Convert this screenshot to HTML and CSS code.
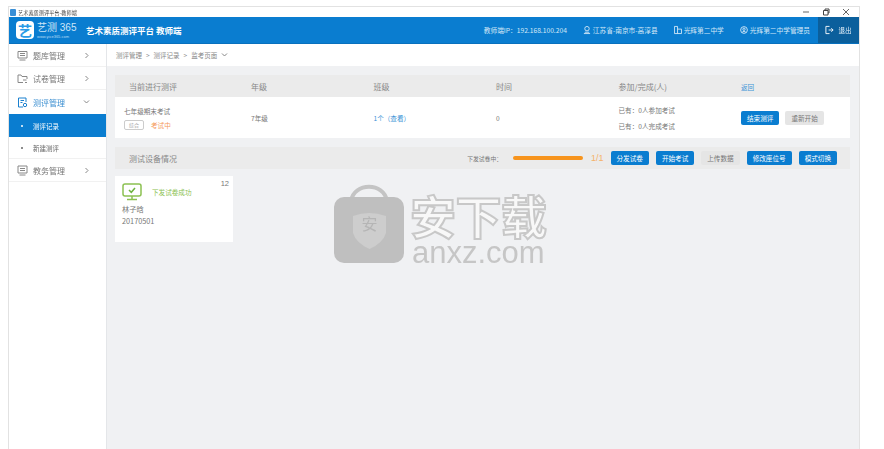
FILE: index.html
```html
<!DOCTYPE html>
<html>
    <head>
        <meta charset="utf-8">
        <title>艺术素质测评平台-教师端</title>
        <link rel="stylesheet" href="styles.css">
    </head>
    <body>
        <div class="window">
            <div class="titlebar">
                <span class="app-icon"></span>
                <span class="title-text">艺术素质测评平台-教师端</span>
                <div class="win-controls">
                    <svg width="8" height="8" viewBox="0 0 8 8"><path d="M1 4h6" stroke="#666" fill="none"/></svg>
                    <svg width="8" height="8" viewBox="0 0 8 8"><path d="M1.500 2.500h4.500v4.500h-4.500zM3 2.500v-1.500h4v4h-1" stroke="#444" fill="none"/></svg>
                    <svg width="8" height="8" viewBox="0 0 8 8"><path d="M1 1l6 6M7 1l-6 6" stroke="#666" fill="none"/></svg>
                </div>
            </div>
            <div class="topbar">
                <div class="logo">
                    <span class="logo-mark">艺</span>
                    <div class="logo-name">
                        <span class="logo-big">艺测 365</span>
                        <span class="logo-url">www.yice365.com</span>
                    </div>
                </div>
                <div class="platform">艺术素质测评平台 教师端</div>
                <div class="top-info">
                    <span class="ip">教师端IP：192.168.100.204</span>
                    <span class="info-item">
                        <svg width="8" height="10" viewBox="0 0 9 10"><circle cx="4.500" cy="3.500" r="2.500" stroke="#d5e8f7" fill="none"/><path d="M1 9h7M2 7.500h5" stroke="#d5e8f7" fill="none"/></svg>
                        江苏省-南京市-高淳县
                    </span>
                    <span class="info-item">
                        <svg width="8" height="10" viewBox="0 0 9 10"><path d="M.5 9V1h3.500v8M4 4h4.500v5H.5" stroke="#d5e8f7" fill="none"/></svg>
                        光辉第二中学
                    </span>
                    <span class="info-item">
                        <svg width="8" height="10" viewBox="0 0 9 10"><circle cx="4.500" cy="5" r="3.800" stroke="#d5e8f7" fill="none"/><circle cx="4.500" cy="4.200" r="1.300" stroke="#d5e8f7" fill="none"/><path d="M2.500 7.500c1-1.200 3-1.200 4 0" stroke="#d5e8f7" fill="none"/></svg>
                        光辉第二中学管理员
                    </span>
                </div>
                <div class="logout">
                    <svg width="9" height="10" viewBox="0 0 10 10"><path d="M5 1H1v8h4M4 5h5M7 3l2 2-2 2" stroke="#fff" fill="none"/></svg>
                    退出
                </div>
            </div>
            <div class="main">
                <div class="sidebar">
                    <div class="menu-item">
                        <svg class="menu-icon" width="11" height="11" viewBox="0 0 11 11"><path d="M1 1.500h9v6.500H1zM3 3.500h5M3 5.500h5M2.500 10h6" stroke="#888" fill="none"/></svg>
                        <span class="menu-name">题库管理</span>
                        <svg class="arrow" width="6" height="7" viewBox="0 0 6 7"><path d="M1.500 1l2.500 2.500L1.500 6" stroke="#888" fill="none"/></svg>
                    </div>
                    <div class="menu-item">
                        <svg class="menu-icon" width="11" height="11" viewBox="0 0 11 11"><path d="M6 9.500H1V2h3l1 1.500h5V6M6 7h3.500M8 9.500h2" stroke="#888" fill="none"/></svg>
                        <span class="menu-name">试卷管理</span>
                        <svg class="arrow" width="6" height="7" viewBox="0 0 6 7"><path d="M1.500 1l2.500 2.500L1.500 6" stroke="#888" fill="none"/></svg>
                    </div>
                    <div class="menu-item active-group">
                        <svg class="menu-icon" width="11" height="11" viewBox="0 0 11 11"><path d="M9 5V1H1.500v9H6M3.500 3.500h3.500M3.500 5.500h2" stroke="#1a80cf" fill="none"/><circle cx="8" cy="8" r="1.700" stroke="#1a80cf" fill="none"/></svg>
                        <span class="menu-name">测评管理</span>
                        <svg class="arrow" width="7" height="6" viewBox="0 0 7 6"><path d="M1 1.500l2.500 2.500L6 1.500" stroke="#888" fill="none"/></svg>
                    </div>
                    <div class="sub-item sub-active"><i class="dot"></i>测评记录</div>
                    <div class="sub-item"><i class="dot"></i>新建测评</div>
                    <div class="menu-item">
                        <svg class="menu-icon" width="11" height="11" viewBox="0 0 11 11"><path d="M1 1h9v7H1zM3 3.500h5M3 5.500h5M2.500 10h6" stroke="#888" fill="none"/></svg>
                        <span class="menu-name">教务管理</span>
                        <svg class="arrow" width="6" height="7" viewBox="0 0 6 7"><path d="M1.500 1l2.500 2.500L1.500 6" stroke="#888" fill="none"/></svg>
                    </div>
                </div>
                <div class="content">
                    <div class="crumbs">
                        <span>测评管理</span><span class="sep">&gt;</span><span>测评记录</span><span class="sep">&gt;</span><span>监考页面</span>
                        <svg width="7" height="6" viewBox="0 0 7 6"><path d="M1 1.500l2.500 2.500L6 1.500" stroke="#888" fill="none"/></svg>
                    </div>
                    <div class="panels">
                        <div class="table">
                            <div class="table-row table-head">
                                <div class="col-name head-first">当前进行测评</div>
                                <div class="col-grade">年级</div>
                                <div class="col-class">班级</div>
                                <div class="col-time">时间</div>
                                <div class="col-count">参加/完成(人)</div>
                                <div class="col-ops"><a class="back">返回</a></div>
                            </div>
                            <div class="table-row table-body">
                                <div class="col-name">
                                    <div class="exam-name">七年级期末考试</div>
                                    <div class="exam-state"><span class="tag">综合</span><span class="state">考试中</span></div>
                                </div>
                                <div class="col-grade">7年级</div>
                                <div class="col-class"><a class="link">1个（查看）</a></div>
                                <div class="col-time">0</div>
                                <div class="col-count count-lines">
                                    <div>已有：0人参加考试</div>
                                    <div>已有：0人完成考试</div>
                                </div>
                                <div class="col-ops ops-btns">
                                    <button class="btn">结束测评</button>
                                    <button class="btn btn-gray">重新开始</button>
                                </div>
                            </div>
                        </div>
                        <div class="device-head">
                            <div class="device-title">测试设备情况</div>
                            <div class="progress-label">下发试卷中：</div>
                            <div class="progress"></div>
                            <div class="progress-num">1/1</div>
                            <button class="btn">分发试卷</button>
                            <button class="btn">开始考试</button>
                            <button class="btn btn-gray">上传数据</button>
                            <button class="btn">修改座位号</button>
                            <button class="btn">模式切换</button>
                        </div>
                        <div class="device-card">
                            <div class="seat">12</div>
                            <div class="device-status">
                                <svg width="20" height="18" viewBox="0 0 20 18"><rect x="1" y="1" width="18" height="12" rx="2" stroke="#8cc152" stroke-width="1.500" fill="#fff"/><path d="M7 7l2.300 2.300L13 5" stroke="#6db33f" stroke-width="1.500" fill="none"/><path d="M10 13v3M5 16.500h10" stroke="#8cc152" stroke-width="1.500" fill="none"/></svg>
                                <span class="status-text">下发试卷成功</span>
                            </div>
                            <div class="student">林子晗</div>
                            <div class="student">20170501</div>
                        </div>
                    </div>
                </div>
            </div>
        </div>
        <div class="watermark">
            <svg width="72" height="82" viewBox="0 0 72 82">
                <path d="M17 18C20 -1 50 -1 53 18" stroke="#c4c4c4" stroke-width="4" fill="none"/>
                <rect x="0" y="14" width="70" height="66" rx="10" fill="#bfbfbf"/>
                <path d="M19 33q16-6 33 0v17q-3 10-16.500 16q-13.500-6-16.500-16z" fill="#cdcdcd"/>
                <text x="35.500" y="47" font-size="16" text-anchor="middle" fill="#b5b5b5" font-family="Noto Sans CJK SC">安</text>
            </svg>
            <div class="wm-text">
                <div class="wm-cn">安下载</div>
                <div class="wm-en">anxz.com</div>
            </div>
        </div>
    </body>
</html>
```

FILE: styles.css
```css
html, body {
    margin: 0;
    height: 100%;
    overflow: hidden;
    background: #fff;
}
body {
    font-family: "Noto Sans CJK SC", "Liberation Sans", sans-serif;
    font-size: 6.600px;
    color: #777;
    padding: 6px 24px 0 8px;
    box-sizing: border-box;
}
.window {
    height: 100%;
    display: flex;
    flex-direction: column;
    border: 1px solid #e2e2e2;
    border-bottom: none;
    box-sizing: border-box;
    filter: blur(.3px);
}
.titlebar {
    height: 10px;
    display: flex;
    align-items: center;
    gap: 2px;
    padding-left: 1px;
    color: #444;
    font-size: 5.200px;
}
.app-icon {
    width: 6px;
    height: 7px;
    background: #3a8fd6;
    border-radius: 1px;
}
.win-controls {
    margin-left: auto;
    display: flex;
    gap: 12px;
    padding-right: 9px;
}
.topbar {
    height: 27px;
    background: #0a7dd0;
    display: flex;
    align-items: center;
    color: #fff;
    border-bottom: 1px solid #0870bd;
    box-sizing: border-box;
}
.logo {
    display: flex;
    align-items: center;
    gap: 3px;
    padding-left: 7px;
    width: 61px;
}
.logo-mark {
    width: 18px;
    height: 18px;
    background: #fff;
    color: #2b9be6;
    border-radius: 4px;
    font-size: 14px;
    font-weight: 700;
    line-height: 18px;
    text-align: center;
}
.logo-name {
    display: flex;
    flex-direction: column;
}
.logo-big {
    font-family: "Liberation Sans", "Noto Sans CJK SC", sans-serif;
    font-size: 10px;
    line-height: 12px;
    color: #cfe6f8;
    white-space: nowrap;
}
.logo-url {
    font-family: "Liberation Sans", sans-serif;
    font-size: 4px;
    line-height: 5px;
    color: #b9dbf4;
}
.platform {
    margin-left: 9px;
    font-size: 8.500px;
    font-weight: 700;
}
.top-info {
    margin-left: auto;
    display: flex;
    align-items: center;
    color: #d5e8f7;
    gap: 16.500px;
    padding-right: 8px;
    font-size: 6.700px;
}
.info-item {
    display: flex;
    align-items: center;
    gap: 1.500px;
}
.logout {
    width: 41px;
    height: 100%;
    background: #0b5f9c;
    display: flex;
    align-items: center;
    justify-content: center;
    gap: 4px;
    color: #e6f1fa;
}
.main {
    flex: 1;
    display: flex;
    min-height: 0;
}
.sidebar {
    width: 97px;
    background: #fff;
    border-right: 1px solid #e4e6e9;
    flex-shrink: 0;
}
.menu-item {
    height: 23px;
    display: flex;
    align-items: center;
    padding: 0 16px 0 8px;
    font-size: 8px;
    color: #777;
    border-bottom: 1px solid #f1f1f1;
    box-sizing: border-box;
}
.menu-icon {
    margin-right: 5px;
}
.menu-name {
    flex: 1;
}
.active-group {
    height: 24px;
    color: #3b8fd1;
    border-bottom: none;
}
.sub-item {
    height: 23px;
    display: flex;
    align-items: center;
    padding-left: 12px;
    font-size: 6.500px;
    color: #666;
    border-bottom: 1px solid #f1f1f1;
    box-sizing: border-box;
}
.sub-item + .sub-item {
    height: 22px;
}
.sub-active {
    background: #0a7dd0;
    color: #fff;
    border-bottom: none;
}
.dot {
    width: 2px;
    height: 2px;
    background: currentColor;
    border-radius: 50%;
    margin-right: 10px;
}
.content {
    flex: 1;
    background: #f0f1f3;
    min-width: 0;
}
.crumbs {
    height: 22px;
    background: #fff;
    display: flex;
    align-items: center;
    gap: 4px;
    padding-left: 9px;
    font-size: 6.500px;
    color: #888;
}
.panels {
    padding: 9px 9px 0 8px;
}
.table-row {
    display: flex;
    align-items: center;
}
.table-head {
    height: 22px;
    background: #ebebeb;
    font-size: 8px;
    color: #888;
}
.table-body {
    height: 41px;
    background: #fff;
}
.col-name {
    width: 136px;
    padding-left: 9px;
    box-sizing: border-box;
}
.head-first {
    padding-left: 14px;
}
.col-grade,
.col-class,
.col-time,
.col-count {
    width: 122.500px;
}
.back, .link {
    color: #3c93d6;
}
.back {
    font-size: 6.600px;
}
.exam-state {
    display: flex;
    align-items: center;
    gap: 7px;
    margin-top: 4px;
}
.exam-name {
    line-height: 10px;
}
.tag {
    border: 1px solid #ccc;
    border-radius: 2px;
    font-size: 5px;
    padding: 0 4px;
    line-height: 8px;
    color: #999;
}
.state {
    color: #f59a5a;
}
.count-lines div {
    line-height: 16px;
}
.ops-btns {
    display: flex;
    gap: 6px;
}
.btn {
    height: 14px;
    padding: 0 6px;
    border: none;
    border-radius: 2px;
    background: #0a7dd0;
    color: #fff;
    font-family: inherit;
    font-size: 6.600px;
    line-height: 14px;
}
.btn-gray {
    background: #e5e5e5;
    color: #777;
}
.device-head {
    margin-top: 9px;
    height: 22px;
    background: #ebebeb;
    display: flex;
    align-items: center;
    gap: 7px;
    padding-right: 13px;
}
.device-title {
    font-size: 8px;
    padding-left: 14px;
    color: #888;
    margin-right: auto;
}
.progress-label {
    font-size: 5.800px;
}
.progress {
    width: 70px;
    height: 4px;
    margin-left: 4px;
    background: #f7941d;
    border-radius: 2px;
}
.progress-num {
    color: #f5b26b;
    font-size: 9px;
    font-family: "Liberation Sans", sans-serif;
    margin-left: 1px;
}
.device-card {
    position: relative;
    width: 118px;
    height: 66px;
    margin-top: 7px;
    padding: 7px 7px 0;
    background: #fff;
    box-sizing: border-box;
}
.seat {
    position: absolute;
    top: 3px;
    right: 4px;
    font-size: 7.500px;
    font-family: "Liberation Sans", sans-serif;
}
.device-status {
    display: flex;
    align-items: center;
    gap: 10px;
    margin-bottom: 2px;
}
.status-text {
    color: #8cc152;
}
.student {
    line-height: 12px;
    font-size: 7.300px;
}
.watermark {
    position: absolute;
    left: 334px;
    top: 183px;
    display: flex;
    align-items: flex-start;
    gap: 4px;
}
.wm-text {
    display: flex;
    flex-direction: column;
    margin-top: 11px;
}
.wm-cn {
    font-family: "Liberation Sans", "Noto Sans CJK SC", sans-serif;
    font-size: 46px;
    font-weight: 700;
    line-height: 48px;
    letter-spacing: -.5px;
    color: #f8f8f8;
    -webkit-text-stroke: 2px #c8c8c8;
    white-space: nowrap;
}
.wm-en {
    font-family: "Liberation Sans", sans-serif;
    font-size: 31px;
    line-height: 21px;
    margin-left: 2px;
    color: #c6c6c6;
}
```
